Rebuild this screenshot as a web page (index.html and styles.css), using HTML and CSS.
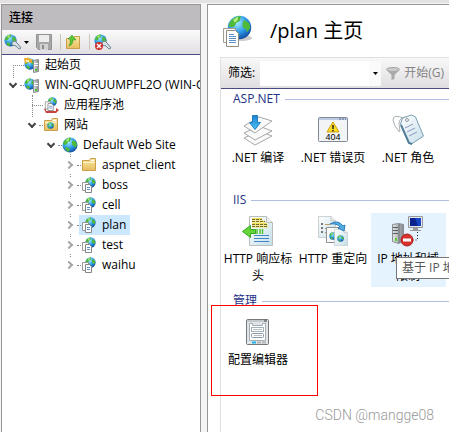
FILE: index.html
```
<!DOCTYPE html>
<html lang="zh-CN">
<head>
  <meta charset="UTF-8" />
  <title>/plan 主页</title>
  <link rel="stylesheet" href="styles.css">
</head>
<body>

  <!-- shared icons -->
  <svg class="sprite" width="0" height="0" aria-hidden="true">
    <defs>
      <radialGradient id="sea" cx="40%" cy="30%" r="70%">
        <stop offset="0" stop-color="#a5ebff" />
        <stop offset="0.6" stop-color="#2b98e6" />
        <stop offset="1" stop-color="#1450a4" />
      </radialGradient>
      <linearGradient id="gold" x2="0" y2="1">
        <stop offset="0" stop-color="#fbe8a9" />
        <stop offset="1" stop-color="#e6bd5c" />
      </linearGradient>
      <linearGradient id="steel" x2="1">
        <stop offset="0" stop-color="#e4e6e8" />
        <stop offset="1" stop-color="#85898d" />
      </linearGradient>
      <linearGradient id="glass" x2="1" y2="1">
        <stop offset="0" stop-color="#ffffff" />
        <stop offset="1" stop-color="#c6dfe9" />
      </linearGradient>
      <linearGradient id="arrow" x2="0" y2="1">
        <stop offset="0" stop-color="#1d83d3" />
        <stop offset="1" stop-color="#4fc1f6" />
      </linearGradient>
    </defs>
    <symbol id="globe" viewBox="0 0 16 16">
      <circle cx="8" cy="8" r="7.5" fill="url(#sea)" />
      <path d="M3 3Q6 0 9 1L8 4 6 5 5 7 3 8 1 7Q1 5 3 3zM11 3L14 5 15 8 13 11 12 9 10 8 10 5zM4 10L7 11 8 13 6 15Q3 13 3 11z" fill="#4fb93a" />
      <path d="M4 3L7 1 7 3 5 5z" fill="#b5ee7c" />
    </symbol>
    <symbol id="app" viewBox="0 0 16 16">
      <use href="#globe" x="4" y="0" width="11" height="11" />
      <path d="M1.500 5.500h6v8h-6z" fill="#fff" stroke="#989898" />
      <path d="M4.500 7.500h4l2 2v6h-6z" fill="#fff" stroke="#858585" />
      <path d="M6 10.500h3M6 12.500h3" stroke="#5d8fc9" />
    </symbol>
    <symbol id="app-large" viewBox="0 0 32 34">
      <ellipse cx="20" cy="24" rx="10" ry="3" fill="#ccc" />
      <use href="#globe" x="5" y="1" width="25" height="25" />
      <path d="M1.500 14.500h12v14h-12z" fill="#faf9f5" stroke="#a29d94" />
      <path d="M4.500 16.500h9l3 3v13h-12z" fill="#fff" stroke="#8e8a84" />
      <path d="M7 20.500h5M7 22.500h7M7 24.500h7M7 26.500h7M7 28.500h7" stroke="#5b8fc8" />
    </symbol>
    <symbol id="server" viewBox="0 0 16 16">
      <use href="#globe" x="0" y="1" width="12" height="12" />
      <path d="M9.500 3.500l5-1v12l-5 1z" fill="url(#steel)" stroke="#8b8f93" />
      <path d="M10 6.500h4M10 8.500h4" stroke="#fff" />
      <path d="M11 12h2v2h-2z" fill="#52c52c" />
    </symbol>
    <symbol id="folder" viewBox="0 0 16 16">
      <path d="M1.500 3.500h7l1-2h5v12h-13z" fill="url(#gold)" stroke="#c99f48" />
      <path d="M10 3.500h3" stroke="#fff" />
      <path d="M2 5.500h12" stroke="#fff3c9" />
    </symbol>
    <symbol id="plug" viewBox="0 0 18 16">
      <use href="#globe" x="0" y="0" width="13" height="13" />
      <path d="M8 8l3-1 3 3 3 4-2 1-3-3-4-1z" fill="#d8e0e5" stroke="#6b8794" />
    </symbol>
    <symbol id="page" viewBox="0 0 24 30">
      <path d="M.500 .500h17l6 6v23h-23z" fill="url(#glass)" stroke="#b9bdbd" />
      <path d="M17.500 .500v6h6" fill="#eee" stroke="#b9bdbd" />
    </symbol>
  </svg>

  <main class="workspace">
    <section class="panel connections">
      <h2 class="panel-title">连接</h2>
      <div class="toolbar">
        <button class="tool" type="button" aria-label="连接">
          <svg width="18" height="16"><use href="#plug" /></svg>
          <svg width="5" height="3"><path d="M0 0h5L2.500 3z" /></svg>
        </button>
        <button class="tool" type="button" aria-label="保存" disabled>
          <svg width="16" height="16" viewBox="0 0 16 16">
            <path d="M.500 .500h15v15h-13l-2-2z" fill="#a6a6a6" stroke="#929292" />
            <path d="M3 1h10v7H3z" fill="#ededed" />
            <path d="M4 10h8v6H4z" fill="#d2d2d2" />
            <path d="M6 11h2v4H6z" fill="#8b8b8b" />
          </svg>
        </button>
        <span class="divider"></span>
        <button class="tool" type="button" aria-label="向上">
          <svg width="16" height="16" viewBox="0 0 16 16">
            <path d="M1.500 4.500h7l1-2h5v12h-13z" fill="url(#gold)" stroke="#c99f48" />
            <path d="M4 12Q8 11 8 6h3L7 1 3 5h2Q6 9 4 12z" fill="#58c737" stroke="#2d8a22" stroke-width=".5" />
          </svg>
        </button>
        <span class="divider"></span>
        <button class="tool" type="button" aria-label="断开连接">
          <svg width="18" height="16" viewBox="0 0 18 16">
            <use href="#plug" width="18" height="16" />
            <circle cx="5" cy="12" r="4" fill="#cf2e2d" />
            <path d="M3 10l4 4M7 10l-4 4" stroke="#fff" stroke-width="1.500" />
          </svg>
        </button>
      </div>

      <ul class="tree">
        <li>
          <div class="node first">
            <span class="toggle"></span>
            <a class="node-label" href="#">
              <svg width="16" height="16" viewBox="0 0 16 16">
                <use href="#server" width="16" height="16" />
                <path d="M0 1h3l1-1 1 2h3v4L4 5 1 7z" fill="#f0ac2b" />
                <path d="M2 3h3v2H2z" fill="#fff0ad" />
              </svg>起始页</a>
          </div>
        </li>
        <li>
          <div class="node open">
            <button class="toggle" type="button" aria-label="折叠"></button>
            <a class="node-label" href="#"><svg width="16" height="16"><use href="#server" /></svg>WIN-GQRUUMPFL2O (WIN-GQRUUMPFL2O\Administrator)</a>
          </div>
          <ul>
            <li>
              <div class="node branch">
                <span class="toggle"></span>
                <a class="node-label" href="#">
                  <svg width="16" height="16" viewBox="0 0 16 16">
                    <path d="M1 12l2-1v3h10v-3l3 2-3 3H3z" fill="#c8433c" />
                    <use href="#app" width="16" height="14" />
                  </svg>应用程序池</a>
              </div>
            </li>
            <li>
              <div class="node open">
                <button class="toggle" type="button" aria-label="折叠"></button>
                <a class="node-label" href="#">
                  <svg width="16" height="16" viewBox="0 0 16 16">
                    <use href="#folder" width="16" height="16" />
                    <use href="#globe" x="4" y="5" width="7" height="7" />
                  </svg>网站</a>
              </div>
              <ul>
                <li>
                  <div class="node open">
                    <button class="toggle" type="button" aria-label="折叠"></button>
                    <a class="node-label" href="#"><svg width="16" height="16"><use href="#globe" /></svg>Default Web Site</a>
                  </div>
                  <ul>
                    <li><div class="node closed"><button class="toggle" type="button" aria-label="展开"></button><a class="node-label" href="#"><svg width="16" height="16"><use href="#folder" /></svg>aspnet_client</a></div></li>
                    <li><div class="node closed"><button class="toggle" type="button" aria-label="展开"></button><a class="node-label" href="#"><svg width="16" height="16"><use href="#app" /></svg>boss</a></div></li>
                    <li><div class="node closed"><button class="toggle" type="button" aria-label="展开"></button><a class="node-label" href="#"><svg width="16" height="16"><use href="#app" /></svg>cell</a></div></li>
                    <li><div class="node closed"><button class="toggle" type="button" aria-label="展开"></button><a class="node-label selected" href="#"><svg width="16" height="16"><use href="#app" /></svg>plan</a></div></li>
                    <li><div class="node closed"><button class="toggle" type="button" aria-label="展开"></button><a class="node-label" href="#"><svg width="16" height="16"><use href="#app" /></svg>test</a></div></li>
                    <li><div class="node closed"><button class="toggle" type="button" aria-label="展开"></button><a class="node-label" href="#"><svg width="16" height="16"><use href="#app" /></svg>waihu</a></div></li>
                  </ul>
                </li>
              </ul>
            </li>
          </ul>
        </li>
      </ul>
    </section>

    <section class="panel home">
      <header class="home-header">
        <svg width="32" height="34"><use href="#app-large" /></svg>
        <h1>/plan 主页</h1>
      </header>

      <div class="features">
        <div class="filter-bar">
          <label for="filter">筛选:</label>
          <div class="combo">
            <input type="text" id="filter">
            <button type="button" aria-label="筛选历史"><svg width="5" height="3"><path d="M0 0h5L2.500 3z" /></svg></button>
          </div>
          <button class="start" type="button" disabled>
            <svg width="14" height="13" viewBox="0 0 14 13">
              <ellipse cx="7" cy="2.500" rx="6.500" ry="2" fill="#ccc" stroke="#a2a2a2" />
              <path d="M.500 3Q7 6 13.500 3L8.500 8v4l-3 1V8z" fill="#aaa" />
            </svg>开始(G)</button>
        </div>

        <section class="group">
          <h3>ASP.NET</h3>
          <div class="tiles">
            <a class="tile" href="#">
              <svg width="32" height="32" viewBox="0 0 32 32">
                <g fill="#fafafa" stroke="#a5a8aa">
                  <path d="M2 24l15-7 13 5-17 9z" />
                  <path d="M2 19l15-7 13 5-17 9z" />
                  <path d="M2 12l15-9 13 4-17 12z" />
                </g>
                <path d="M10.500 1.500h5v7h3l-5.500 7-5.500-7h3z" fill="url(#arrow)" stroke="#237ec0" />
              </svg>
              <span>.NET 编译</span>
            </a>
            <a class="tile" href="#">
              <svg width="32" height="32" viewBox="0 0 32 32">
                <rect x="1.500" y="3.500" width="29" height="24" rx="1" fill="#f3f4f6" stroke="#81899a" />
                <path d="M2 4h28v2H2z" fill="#bdcbe0" />
                <path d="M22 5h7" stroke="#52698f" stroke-dasharray="2 1" />
                <path d="M16 8l6 10H10z" fill="#ffdd27" stroke="#d4a300" stroke-linejoin="round" />
                <path d="M16 11v4M16 16v1.500" stroke="#222" stroke-width="1.500" />
                <text x="16" y="26" text-anchor="middle" class="error-code">404</text>
              </svg>
              <span>.NET 错误页</span>
            </a>
            <a class="tile" href="#">
              <svg width="32" height="32" viewBox="0 0 32 32">
                <path d="M13 5Q1-1 1 6Q2 12 6 16Q9 22 7 10Q7 3 15 3" fill="none" stroke="#a9b1b6" />
                <path d="M8.500 10l2-6 9-3 4 2 8 19-12 8-3-1z" fill="url(#glass)" stroke="#779eb2" />
                <path d="M9 11l8 18 3 1" fill="none" stroke="#527f98" stroke-width="2" />
                <circle cx="15" cy="6" r="1.500" fill="#fff" stroke="#8b9499" />
                <path d="M13 14l8-4M15 18l8-4M17 22l8-4" stroke="#8994be" />
              </svg>
              <span>.NET 角色</span>
            </a>
          </div>
        </section>

        <section class="group">
          <h3>IIS</h3>
          <div class="tiles">
            <a class="tile" href="#">
              <svg width="32" height="32" viewBox="0 0 32 32">
                <use href="#page" x="7" y="1" width="24" height="30" />
                <path d="M10 4h10M10 6.500h13M10 9h15M10 11.500h16" stroke="#f0df58" stroke-width="2" />
                <path d="M10 4.500h10M10 6.500h13M10 9.500h15M10 11.500h16" stroke="#736b27" stroke-dasharray="3 1" />
                <path d="M.500 16.500l8-6v4h5v4h-5v4z" fill="#62d438" stroke="#35a723" />
                <path d="M15 14v5M18 14v5M20.500 14v5" stroke="#53c434" stroke-width="1.500" />
                <path d="M12 20.500h15M12 23.500h15M12 26.500h15" stroke="#4287cb" />
              </svg>
              <span>HTTP 响应标头</span>
            </a>
            <a class="tile" href="#">
              <svg width="32" height="32" viewBox="0 0 32 32">
                <use href="#page" x="1" y="1" width="18" height="22" />
                <path d="M4 9h2M4 13h2M4 17h2" stroke="#777" stroke-width="2" />
                <path d="M8 9.500h5M8 13.500h4M8 17.500h3" stroke="#b59d60" />
                <path d="M9.500 12.500h12v15h-12z" fill="#f8f8f8" stroke="#8f9395" />
                <use href="#globe" x="12" y="17" width="8" height="8" />
                <use href="#page" x="17" y="14" width="14" height="17" />
                <use href="#globe" x="20" y="20" width="7" height="7" />
                <path d="M13 9Q21 4 26 11l2-1-1 6-6-3 2-1Q20 8 13 9z" fill="#56aee5" stroke="#2c7cb9" />
              </svg>
              <span>HTTP 重定向</span>
            </a>
            <a class="tile hover" href="#">
              <svg width="32" height="32" viewBox="0 0 32 32">
                <path d="M.500 9.500l6-1 5 1v17l-5 2-6-2z" fill="url(#steel)" stroke="#8a8d90" />
                <path d="M1 12.500h5M1 15.500h5M1 18.500h5" stroke="#5a5e62" />
                <path d="M7 9v19" stroke="#676b6f" />
                <path d="M3 23h2v3H3z" fill="#58d12c" />
                <path d="M16.500 1.500h14v11h-14z" fill="#e5e7ea" stroke="#96999d" />
                <path d="M18 3h11v8H18z" fill="#1746c3" />
                <path d="M18 3h5l3 8h-8z" fill="#0a238d" />
                <path d="M21 13h5v2h3v1H18v-1h3z" fill="#999" />
                <path d="M25.500 17v8h-5" fill="none" stroke="#222" stroke-dasharray="1 2" />
                <circle cx="15" cy="25" r="6" fill="#d7302d" stroke="#a82220" />
                <path d="M11 25h8" stroke="#fff" stroke-width="3" />
              </svg>
              <span>IP 地址和域限制</span>
            </a>
          </div>
          <div class="tooltip" role="tooltip">基于 IP 地址</div>
        </section>

        <section class="group">
          <h3>管理</h3>
          <div class="tiles">
            <a class="tile" href="#">
              <svg width="32" height="32" viewBox="0 0 32 32">
                <rect x="4.500" y="3.500" width="22" height="25" rx="1" fill="#e2e5e7" stroke="#73797d" />
                <path d="M5 5h20" stroke="#a4abb0" />
                <path d="M22 5h3" stroke="#444" />
                <path d="M7.500 7.500h3v2h10v-2h3v17h-16z" fill="#fff" stroke="#a3acb3" />
                <rect x="9.500" y="11.500" width="12" height="4" fill="#fff" stroke="#a3b1bd" />
                <rect x="9.500" y="17.500" width="12" height="4" rx="1" fill="#fff" stroke="#8999a7" />
                <path d="M11 13.500h9M12 19.500h8" stroke="#b7bdc1" />
                <path d="M10 26.500h4" stroke="#1cb4e9" stroke-width="2" />
                <path d="M15 26.500h4M20 26.500h4" stroke="#b5b5b5" stroke-width="2" />
              </svg>
              <span>配置编辑器</span>
            </a>
          </div>
          <div class="marker"></div>
        </section>
      </div>
    </section>
  </main>

  <div class="watermark">CSDN @mangge08</div>

</body>
</html>
```
FILE: styles.css
```
* { box-sizing: border-box; }
body { margin: 0; height: 100vh; overflow: hidden; background: #f5f4f4; border-top: 3px solid #e3e1e2; color: #000; font: 12px/16px "Open Sans", "Noto Sans CJK SC", sans-serif; }
h1, h2, h3 { margin: 0; font-weight: normal; }
ul { margin: 0; padding: 0; list-style: none; }
a { color: inherit; text-decoration: none; }
button { margin: 0; padding: 0; border: 0; background: none; color: inherit; font: inherit; }
svg { display: block; flex: none; }
.sprite { position: absolute; }

.workspace { display: flex; gap: 6px; height: 100%; padding: 1px 0 0 1px; }
.panel { border: 1px solid #969696; border-bottom: 0; background: #fff; overflow: hidden; }
.connections { flex: 0 0 200px; }
.home { display: flex; flex-direction: column; flex: 1; min-width: 0; border-right: 0; }

/* connections */
.panel-title { height: 25px; padding-left: 7px; background: #bebcbf; font-size: 12px; line-height: 25px; font-weight: 500; }
.toolbar { display: flex; align-items: center; gap: 7px; height: 25px; padding-left: 2px; border-bottom: 1px solid #4b4a82; background: linear-gradient(#fbfafb, #e1dfe1); }
.tool { display: flex; align-items: center; gap: 2px; }
.divider { width: 1px; height: 16px; margin: 0 -3px 0 1px; background: #c9c5b5; }

.tree ul { padding-left: 19px; }
.node { display: flex; position: relative; height: 20px; padding-left: 3px; }
.toggle { display: flex; align-items: center; justify-content: center; flex: none; width: 16px; margin-right: 1px; }
.node::before { content: ""; position: absolute; left: 18px; top: 10px; width: 4px; border-top: 1px dotted #888; }
.first::before, .branch::before { left: 11px; width: 11px; }
.first::after, .branch::after { content: ""; position: absolute; left: 11px; top: 10px; height: 13px; border-left: 1px dotted #888; }
.branch::after { top: 0; height: 22px; }
.closed::after { content: ""; position: absolute; left: 11px; top: -1px; height: 3px; border-left: 1px dotted #888; }
.open .toggle::before { content: ""; width: 4px; height: 4px; margin-top: -3px; border: solid #444; border-width: 0 2px 2px 0; transform: rotate(45deg); }
.closed .toggle::before { content: ""; width: 4px; height: 4px; margin-left: -3px; border: solid #a6a6a6; border-width: 2px 2px 0 0; transform: rotate(45deg); }
.node-label { display: flex; align-items: center; gap: 5px; padding: 0 4px 0 2px; white-space: nowrap; }
.node-label.selected { background: #cce8ff; }

/* home */
.home-header { display: flex; align-items: center; gap: 16px; flex: 0 0 52px; padding-left: 14px; }
.home-header h1 { font-size: 20px; line-height: 28px; }
.features { flex: 1; min-height: 0; margin-left: 12px; border: 1px solid #dfdfdf; border-width: 1px 0 0 1px; }
.filter-bar { display: flex; align-items: center; gap: 5px; height: 31px; padding-left: 7px; border-bottom: 1px solid #4b4a82; background: linear-gradient(#f9f8f9, #e0dee0); white-space: nowrap; }
.combo { display: flex; flex: 0 0 121px; min-width: 0; height: 25px; background: #fff; }
.combo input { flex: 1; width: 0; min-width: 0; border: 0; background: none; font: inherit; }
.combo button { display: flex; align-items: center; justify-content: center; flex: none; width: 12px; background: #fafafa; }
.start { display: flex; align-items: center; gap: 4px; color: #838383; }

.group { position: relative; margin: 2px 0 6px; }
.group + .group { margin-top: 0; }
.group h3 { display: flex; align-items: center; gap: 5px; height: 16px; margin-bottom: 5px; padding-left: 12px; color: #1e3287; font-size: 12px; }
.group h3::after { content: ""; flex: 1; height: 1px; background: #b0bfde; }
.tiles { display: flex; }
.tile { display: flex; flex-direction: column; align-items: center; gap: 3px; flex: 0 0 75px; min-height: 74px; padding: 2px 2px 0 1px; line-height: 17px; text-align: center; }
.tile span { width: 100%; }
.tile.hover { background: #e5f3ff; }
.error-code { font: 9px "Liberation Sans", sans-serif; }

/* overlays */
.tooltip { position: absolute; left: 175px; top: 65px; width: 90px; height: 22px; padding-left: 5px; border: 1px solid #767676; background: #fff; color: #575757; line-height: 20px; white-space: nowrap; }
.marker { position: absolute; left: -10px; top: 12px; width: 107px; height: 91px; border: 1px solid #f00; }
.watermark { position: absolute; right: 15px; bottom: 8px; color: #999; font: 300 14px/18px Roboto, sans-serif; }
```
